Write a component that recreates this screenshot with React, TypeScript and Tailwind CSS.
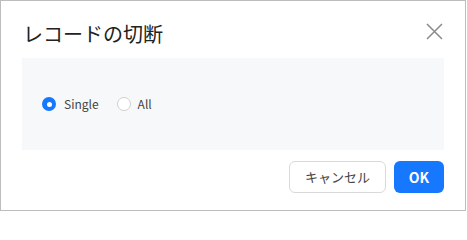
import React from "react";

export default function App() {
  const font = { fontFamily: '"Noto Sans CJK JP", "Noto Sans", sans-serif' };
  return (
    <div className="w-[467px] h-[212px] bg-white" style={font}>
      <div className="w-[466px] h-[211px] border border-[#bdbdbd] bg-white flex flex-col">
        <div className="flex justify-between items-start h-[57px] pl-[22px] pr-[21px]">
          <div className="text-[20px] leading-[28px] pt-[19px] text-[#222]">レコードの切断</div>
          <button className="mt-[21px] w-[19px] h-[19px] flex items-center justify-center text-[#8a8a8a]">
            <svg width="17" height="17" viewBox="0 0 17 17" fill="none" stroke="currentColor" strokeWidth="1.5">
              <path d="M1 1 L16 16 M16 1 L1 16" />
            </svg>
          </button>
        </div>
        <div className="mx-[21px] h-[92px] bg-[#f7f8fa] flex items-center pl-[20px] gap-[18px]">
          <label className="flex items-center gap-[8px]">
            <span className="w-[14px] h-[14px] rounded-full bg-[#1677ff] flex items-center justify-center">
              <span className="w-[5px] h-[5px] rounded-full bg-white" />
            </span>
            <span className="text-[12px] text-[#444]">Single</span>
          </label>
          <label className="flex items-center gap-[7px]">
            <span className="w-[14px] h-[14px] rounded-full bg-white border border-[#d0d0d0]" />
            <span className="text-[12px] text-[#444]">All</span>
          </label>
        </div>
        <div className="flex justify-end gap-[8px] pr-[21px] pt-[11px]">
          <button className="w-[97px] h-[32px] rounded-[6px] border border-[#d9d9d9] bg-white text-[13px] text-[#444]">
            キャンセル
          </button>
          <button className="w-[50px] h-[32px] rounded-[6px] bg-[#1677ff] text-[14px] font-bold text-white">
            OK
          </button>
        </div>
      </div>
    </div>
  );
}
